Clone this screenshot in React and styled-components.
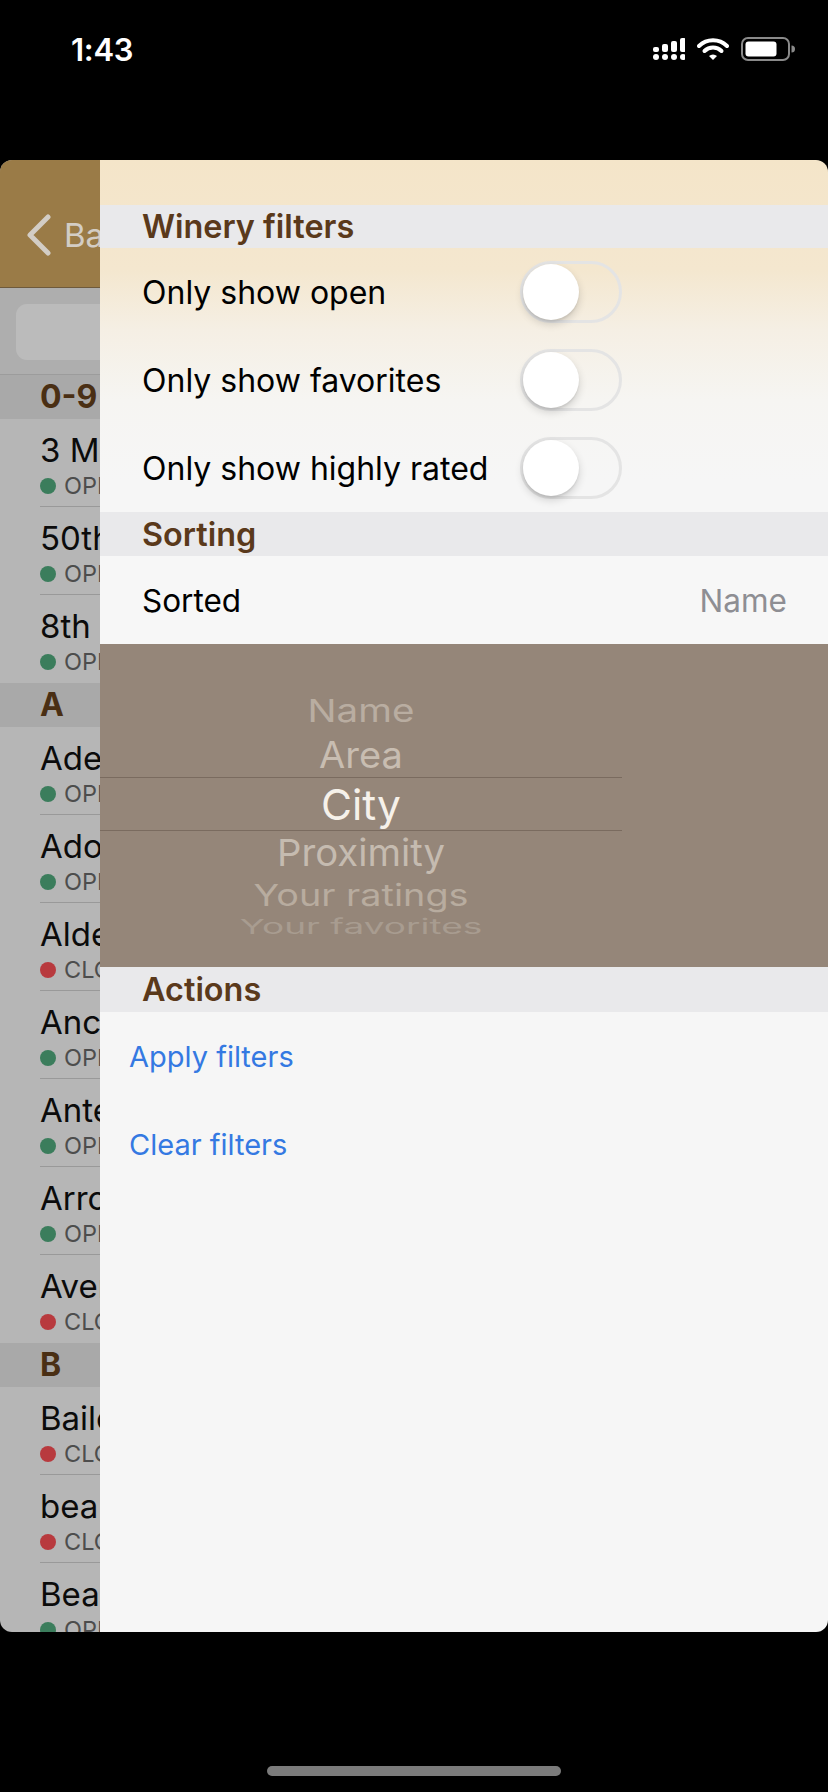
import React from 'react';
import styled, { createGlobalStyle } from 'styled-components';

const GlobalStyle = createGlobalStyle`
  html, body {
    margin: 0;
    padding: 0;
    background: #000;
  }
  * {
    box-sizing: border-box;
  }
`;

const Screen = styled.div`
  width: 828px;
  height: 1792px;
  background: #000;
  font-family: 'Inter', 'Noto Sans', sans-serif;
  display: flex;
  flex-direction: column;
  overflow: hidden;
`;

const StatusBar = styled.div`
  height: 160px;
  flex-shrink: 0;
  display: flex;
  align-items: flex-start;
  justify-content: space-between;
  padding: 33px 33px 0 71px;
`;

const Clock = styled.div`
  color: #fff;
  font-size: 31px;
  font-weight: 600;
  letter-spacing: -0.3px;
  line-height: 34px;
`;

const StatusIcons = styled.div`
  display: flex;
  align-items: center;
  gap: 12px;
  padding-top: 4px;
`;

const Sheet = styled.div`
  height: 1472px;
  flex-shrink: 0;
  display: flex;
  border-radius: 12px;
  overflow: hidden;
`;

/* ---------- list behind the filter panel ---------- */

const ListPane = styled.div`
  width: 100px;
  flex-shrink: 0;
  background: #b6b6b6;
  overflow: hidden;
`;

const NavBar = styled.div`
  height: 128px;
  background: #9a7b47;
  border-bottom: 1px solid #6e5a3c;
  display: flex;
  align-items: center;
  gap: 13px;
  padding: 22px 0 0 27px;
  overflow: hidden;

  svg {
    flex-shrink: 0;
  }
`;

const BackLabel = styled.span`
  flex-shrink: 0;
  color: #d3cdc5;
  font-size: 33px;
  white-space: nowrap;
`;

const SearchArea = styled.div`
  height: 87px;
  background: #aeaeae;
  border-bottom: 1px solid #9c9c9c;
  padding: 16px 0 0 16px;
`;

const SearchField = styled.div`
  width: 200px;
  height: 56px;
  border-radius: 11px;
  background: #bbbbbb;
`;

const SectionHeader = styled.div`
  height: 44px;
  background: #a9a9a9;
  color: #4a2f14;
  font-size: 32px;
  font-weight: 700;
  line-height: 44px;
  padding-left: 40px;
  white-space: nowrap;
`;

const WineryRow = styled.div`
  height: 88px;
  margin-left: 40px;
  padding-top: 11px;
  border-bottom: ${p => (p.$last ? 'none' : '1px solid #999')};
  white-space: nowrap;
  overflow: hidden;
`;

const WineryName = styled.div`
  color: #0b0b0b;
  font-size: 33px;
  line-height: 40px;
`;

const WineryStatus = styled.div`
  display: flex;
  align-items: center;
  gap: 8px;
  margin-top: 2px;
  color: #4d4d4d;
  font-size: 23.5px;
  line-height: 28px;
`;

const Dot = styled.span`
  width: 16px;
  height: 16px;
  border-radius: 50%;
  flex-shrink: 0;
  background: ${p => (p.$open ? '#3b7d5c' : '#b83a3e')};
`;

/* ---------- filter panel ---------- */

const Panel = styled.div`
  flex: 1;
  display: flex;
  flex-direction: column;
  background: linear-gradient(
    180deg,
    #f4e5c9 0px,
    #f4e7cf 110px,
    #f5efe4 170px,
    #f6f5f2 240px,
    #f6f6f6 320px,
    #f6f6f6 100%
  );
`;

const TopStrip = styled.div`
  height: 45px;
`;

const GroupHeader = styled.div`
  height: ${p => p.$h || 44}px;
  background: #e9e9eb;
  color: #5a391b;
  font-size: 32.4px;
  font-weight: 600;
  display: flex;
  align-items: center;
  padding-left: 42px;
`;

const ToggleRow = styled.div`
  height: 88px;
  display: flex;
  align-items: center;
  padding-left: 42px;
`;

const RowLabel = styled.span`
  width: 378px;
  flex-shrink: 0;
  color: #000;
  font-size: 32px;
`;

const SwitchTrack = styled.div`
  width: 102px;
  height: 62px;
  border-radius: 31px;
  border: 3px solid #e4e4e4;
  display: flex;
  align-items: center;
`;

const SwitchKnob = styled.div`
  width: 56px;
  height: 56px;
  border-radius: 50%;
  background: #fff;
  box-shadow: 0 4px 9px rgba(0, 0, 0, 0.16), 0 2px 2px rgba(0, 0, 0, 0.07);
`;

const ValueRow = styled.div`
  height: 88px;
  background: #f7f7f7;
  display: flex;
  align-items: center;
  justify-content: space-between;
  padding: 0 41px 0 42px;
  font-size: 31.5px;
`;

const ValueText = styled.span`
  color: #8e8e93;
`;

const Picker = styled.div`
  height: 323px;
  background: #958679;
  overflow: hidden;
`;

const PickerColumn = styled.div`
  width: 522px;
  padding-top: 45px;
  display: flex;
  flex-direction: column;
`;

const PickerItem = styled.div`
  height: ${p => p.$h}px;
  display: flex;
  align-items: center;
  justify-content: center;
  color: ${p => p.$color};
  font-size: ${p => p.$size}px;
  transform: scaleY(${p => p.$sy});
  white-space: nowrap;
`;

const PickerSelected = styled(PickerItem)`
  border-top: 1px solid #7a6b5f;
  border-bottom: 1px solid #7a6b5f;
`;

const ActionRow = styled.div`
  height: 88px;
  display: flex;
  align-items: center;
  padding-left: 29px;
  color: #3479e2;
  font-size: 29px;
`;

const HomeBar = styled.div`
  flex: 1;
  display: flex;
  justify-content: center;
  align-items: flex-start;
  padding-top: 134px;
`;

const HomeIndicator = styled.div`
  width: 294px;
  height: 10px;
  border-radius: 5px;
  background: #7b7b7b;
`;

const SignalIcon = () => (
  <svg width="32" height="24" viewBox="0 0 32 24">
    {[0, 1, 2, 3].map(i => (
      <g key={i} fill="#fff">
        <rect x={i * 9} y={10 - i * 3} width="6" height={5 + i * 3} rx="2" />
        <circle cx={i * 9 + 3} cy="20" r="3" />
      </g>
    ))}
  </svg>
);

const WifiIcon = () => (
  <svg width="32" height="22" viewBox="0 0 32 22">
    <path d="M2 8 A20 20 0 0 1 30 8" stroke="#fff" strokeWidth="4" fill="none" strokeLinecap="round" />
    <path d="M7.5 13 A12 12 0 0 1 24.5 13" stroke="#fff" strokeWidth="4" fill="none" strokeLinecap="round" />
    <path d="M12 18 L16 22 L20 18 A6 6 0 0 0 12 18 Z" fill="#fff" />
  </svg>
);

const BatteryIcon = () => (
  <svg width="54" height="24" viewBox="0 0 54 24">
    <rect x="1" y="1" width="47" height="22" rx="6" fill="none" stroke="#8a8a8a" strokeWidth="2" />
    <rect x="4.5" y="4.5" width="31" height="15" rx="3" fill="#fff" />
    <path d="M50.5 8.5 a3.5 3.5 0 0 1 0 7 z" fill="#8a8a8a" />
  </svg>
);

const BackChevron = () => (
  <svg width="24" height="42" viewBox="0 0 24 42">
    <path d="M21 3 L3 21 L21 39" stroke="#d3cdc5" strokeWidth="5" fill="none" strokeLinecap="round" strokeLinejoin="round" />
  </svg>
);

const sections = [
  {
    title: '0-9',
    rows: [
      ['3 Mile Creek', true],
      ['50th Parallel', true],
      ['8th Generation', true],
    ],
  },
  {
    title: 'A',
    rows: [
      ['Adelsheim', true],
      ['Adobe Hills', true],
      ['Alderlea', false],
      ['Ancient Hill', true],
      ['Antelope Ridge', true],
      ['Arrowleaf', true],
      ['Averill Creek', false],
    ],
  },
  {
    title: 'B',
    rows: [
      ['Bailey Creek', false],
      ['beaufort', false],
      ['Beaumont', true],
    ],
  },
];

const filters = ['Only show open', 'Only show favorites', 'Only show highly rated'];

const pickerItems = [
  { label: 'Name', h: 44, size: 38.5, sy: 0.82, color: '#b9ada1' },
  { label: 'Area', h: 44, size: 38, sy: 0.95, color: '#c8bdb1' },
  { label: 'City', h: 54, size: 42.5, sy: 1, color: '#f6f1ea', selected: true },
  { label: 'Proximity', h: 42, size: 38.3, sy: 0.97, color: '#c5bbb0' },
  { label: 'Your ratings', h: 44, size: 37.8, sy: 0.8, color: '#b8ac9f' },
  { label: 'Your favorites', h: 18, size: 37, sy: 0.55, color: '#a89c90' },
];

export default function App() {
  return (
    <Screen>
      <GlobalStyle />
      <StatusBar>
        <Clock>1:43</Clock>
        <StatusIcons>
          <SignalIcon />
          <WifiIcon />
          <BatteryIcon />
        </StatusIcons>
      </StatusBar>

      <Sheet>
        <ListPane>
          <NavBar>
            <BackChevron />
            <BackLabel>Back</BackLabel>
          </NavBar>
          <SearchArea>
            <SearchField />
          </SearchArea>
          {sections.map(section => (
            <React.Fragment key={section.title}>
              <SectionHeader>{section.title}</SectionHeader>
              {section.rows.map(([name, open], i) => (
                <WineryRow key={name} $last={i === section.rows.length - 1}>
                  <WineryName>{name}</WineryName>
                  <WineryStatus>
                    <Dot $open={open} />
                    {open ? 'OPEN' : 'CLOSED'}
                  </WineryStatus>
                </WineryRow>
              ))}
            </React.Fragment>
          ))}
        </ListPane>

        <Panel>
          <TopStrip />
          <GroupHeader $h={43}>Winery filters</GroupHeader>
          {filters.map(label => (
            <ToggleRow key={label}>
              <RowLabel>{label}</RowLabel>
              <SwitchTrack>
                <SwitchKnob />
              </SwitchTrack>
            </ToggleRow>
          ))}
          <GroupHeader>Sorting</GroupHeader>
          <ValueRow>
            <span>Sorted</span>
            <ValueText>Name</ValueText>
          </ValueRow>
          <Picker>
            <PickerColumn>
              {pickerItems.map(item => {
                const Item = item.selected ? PickerSelected : PickerItem;
                return (
                  <Item key={item.label} $h={item.h} $size={item.size} $sy={item.sy} $color={item.color}>
                    {item.label}
                  </Item>
                );
              })}
            </PickerColumn>
          </Picker>
          <GroupHeader $h={45}>Actions</GroupHeader>
          <ActionRow>Apply filters</ActionRow>
          <ActionRow>Clear filters</ActionRow>
        </Panel>
      </Sheet>

      <HomeBar>
        <HomeIndicator />
      </HomeBar>
    </Screen>
  );
}
